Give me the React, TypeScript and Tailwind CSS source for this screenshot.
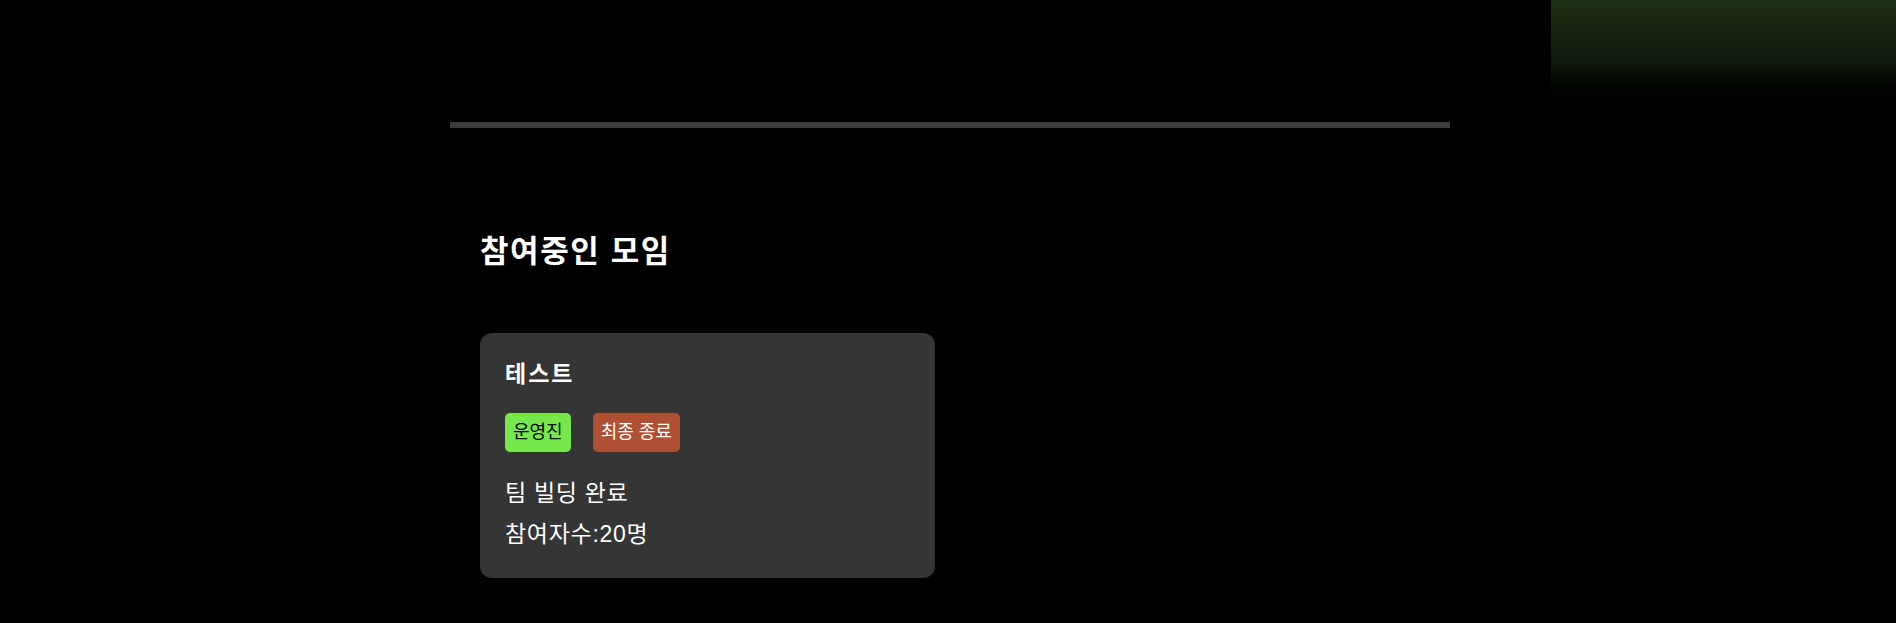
import React from "react";

type Meeting = {
    title: string;
    role: string;
    status: string;
    stage: string;
    members: number;
};

const meetings: Meeting[] = [
    {
        title: "테스트",
        role: "운영진",
        status: "최종 종료",
        stage: "팀 빌딩 완료",
        members: 20,
    },
];

function MeetingCard({ meeting }: { meeting: Meeting }) {
    return (
        <article className="w-[455px] rounded-xl bg-[#353535] pt-[27px] pb-[30px] px-[25px]">
            <h3 className="text-[23px] leading-[28px] tracking-[2px] font-bold text-white">
                {meeting.title}
            </h3>
            <div className="mt-[25px] flex items-center gap-[22px]">
                <span className="rounded-[5px] bg-[#77e84b] px-[8px] py-[6px] text-[18px] leading-[27px] text-black">
                    {meeting.role}
                </span>
                <span className="rounded-[5px] bg-[#b05032] px-[8px] py-[6px] text-[18px] leading-[27px] text-white">
                    {meeting.status}
                </span>
            </div>
            <p className="mt-[27px] text-[23px] leading-[28px] tracking-[0.7px] text-white">
                {meeting.stage}
            </p>
            <p className="mt-[13px] text-[23px] leading-[28px] tracking-[0.7px] text-white">
                참여자수:{meeting.members}명
            </p>
        </article>
    );
}

export default function App() {
    return (
        <div className="relative min-h-screen overflow-hidden bg-black pl-[4px] font-['Liberation_Sans','Noto_Sans_CJK_KR',sans-serif]">
            {/* top-right glow */}
            <div className="absolute right-0 top-0 h-[110px] w-[345px] bg-linear-to-b from-[#1d3013] via-[#0e170a] via-60% to-black" />

            <main className="relative mx-auto w-[1000px] pt-[122px] pb-10">
                <div className="h-[6px] bg-[#3b3b3b]" />

                <section className="px-[30px]">
                    <h2 className="mt-[106px] text-[31px] leading-[36px] tracking-[1.6px] font-bold text-white">
                        참여중인 모임
                    </h2>
                    <div className="mt-[63px] flex flex-wrap gap-6">
                        {meetings.map((m) => (
                            <MeetingCard key={m.title} meeting={m} />
                        ))}
                    </div>
                </section>
            </main>
        </div>
    );
}
